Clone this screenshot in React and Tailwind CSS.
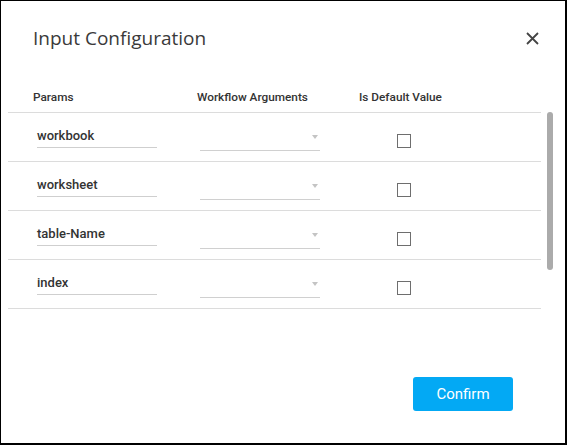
import React from 'react';

const params = ['workbook', 'worksheet', 'table-Name', 'index'];

const ParamRow = ({ name }) => (
  <div className="flex h-[49px] border-b border-[#dcdcdc]">
    <div className="w-[189px] pl-[29px]">
      <div className="mt-[15px] w-[120px] border-b border-[#cfcfcf] pb-[3px] text-[13px] leading-[16px] font-medium text-[#333]">
        {name}
      </div>
    </div>
    <div className="w-[162px] pl-[3px]">
      <div className="mt-[12px] flex h-[26px] w-[120px] items-start justify-end border-b border-[#d0d0d0] pt-[10px] pr-[2px]">
        <span className="h-0 w-0 border-x-[3.5px] border-t-[4px] border-x-transparent border-t-[#c4c4c4]" />
      </div>
    </div>
    <div className="w-[90px] pl-[38px]">
      <div className="mt-[21px] h-[14px] w-[14px] border border-[#6e6e6e] bg-white" />
    </div>
  </div>
);

const App = () => {
  return (
    <div className="flex h-[445px] w-[567px] flex-col border-t border-l border-r-2 border-b-2 border-black bg-white font-['Roboto',sans-serif]">
      <div className="mt-[25px] flex h-[24px] items-center justify-between pl-[32px] pr-[26px]">
        <h1 className="font-['Open_Sans',sans-serif] text-[19px] leading-[24px] text-[#3a3a3a]">Input Configuration</h1>
        <button className="text-[#444]">
          <svg width="13" height="13" viewBox="0 0 13 13" fill="none" stroke="currentColor" strokeWidth="1.8">
            <path d="M1 1L12 12M12 1L1 12" />
          </svg>
        </button>
      </div>

      <div className="mt-[30px] flex">
        <div className="ml-[7px] w-[533px]">
          <div className="flex h-[33px] items-center border-b border-[#dcdcdc] pt-[2px] text-[11.8px] leading-[16px] font-medium text-[#333]">
            <div className="w-[189px] pl-[25px]">Params</div>
            <div className="w-[162px]">Workflow Arguments</div>
            <div>Is Default Value</div>
          </div>
          {params.map((p) => (
            <ParamRow key={p} name={p} />
          ))}
        </div>
        <div className="mt-[32px] ml-[6px] h-[158px] w-[6px] rounded-full bg-[#ababab]" />
      </div>

      <div className="flex flex-1 items-end justify-end pr-[52px] pb-[32px]">
        <button className="h-[34px] w-[100px] rounded-[3px] bg-[#03a9f4] text-[15px] text-white">
          Confirm
        </button>
      </div>
    </div>
  );
};

export default App;
